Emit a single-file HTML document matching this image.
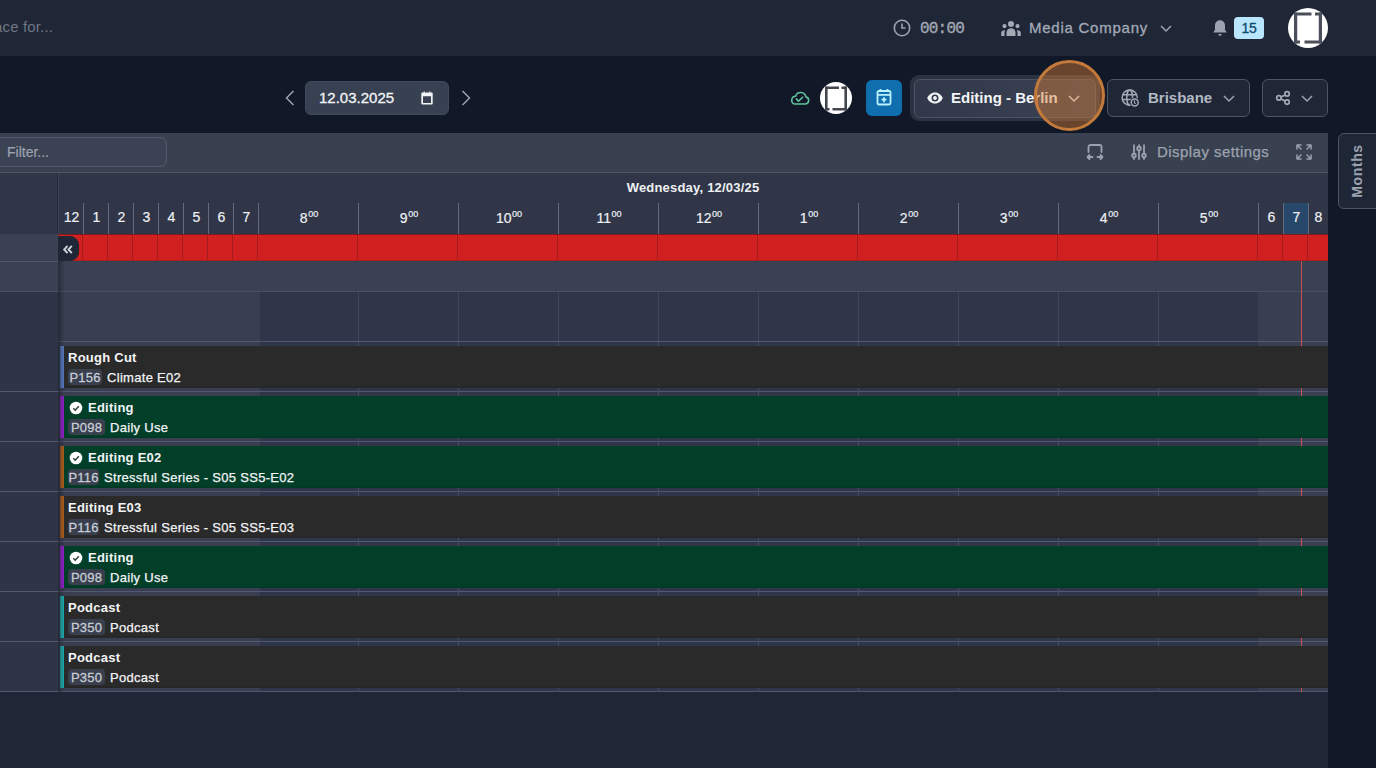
<!DOCTYPE html>
<html><head><meta charset="utf-8">
<style>
*{box-sizing:border-box;margin:0;padding:0}
html,body{width:1376px;height:768px;overflow:hidden;background:#111827;font-family:"Liberation Sans",sans-serif;position:relative}
.a{position:absolute}
.t{position:absolute;white-space:nowrap;line-height:1}
svg{position:absolute;overflow:visible}
</style></head><body>

<!-- TOP BAR -->
<div class="a" style="left:0;top:0;width:1376px;height:56px;background:#1f2737"></div>
<div class="t" style="left:-6px;top:19px;font-size:15px;color:#6f7684;letter-spacing:0.15px">ace for...</div>

<!-- clock -->
<svg style="left:893px;top:19px" width="18" height="18" viewBox="0 0 18 18" fill="none" stroke="#9ca3af" stroke-width="1.6"><circle cx="9" cy="9" r="7.7"/><path d="M9 4.5V9h3.5"/></svg>
<div class="t" style="left:920px;top:21px;font-size:16px;font-family:'Liberation Mono';color:#a3a9b4;letter-spacing:-0.8px;-webkit-text-stroke:0.35px #a3a9b4">00:00</div>

<!-- people -->
<svg style="left:1001px;top:20px" width="20" height="16" viewBox="0 0 20 16" fill="#a3aab6"><circle cx="10" cy="4" r="3"/><circle cx="3.5" cy="6.1" r="2.1"/><circle cx="16.5" cy="6.1" r="2.1"/><path d="M5.5 16v-3.2a4.5 4.5 0 0 1 9 0V16z"/><path d="M0.2 16v-2.8a3 3 0 0 1 3.9-2.9c-.4.8-.6 1.6-.6 2.5V16z"/><path d="M19.8 16v-2.8a3 3 0 0 0-3.9-2.9c.4.8.6 1.6.6 2.5V16z"/></svg>
<div class="t" style="left:1029px;top:20px;font-size:15px;color:#a3aab6;letter-spacing:0.75px;-webkit-text-stroke:0.3px #a3aab6">Media Company</div>
<svg style="left:1160px;top:25px" width="12" height="7" viewBox="0 0 12 7" fill="none" stroke="#9ca3af" stroke-width="1.5"><path d="M1 1l5 5 5-5"/></svg>

<!-- bell -->
<svg style="left:1212px;top:19px" width="16" height="18" viewBox="0 0 16 18" fill="#9ca3af"><path d="M8 1.2c-3 0-5 2.3-5 5.3v4.2L1.3 13.6h13.4L13 10.7V6.5c0-3-2-5.3-5-5.3z"/><path d="M6.3 15h3.4c0 1-.8 1.8-1.7 1.8S6.3 16 6.3 15z"/></svg>
<div class="a" style="left:1234px;top:17px;width:30px;height:22px;border-radius:4px;background:#bae6fd"></div>
<div class="t" style="left:1234px;top:21px;width:30px;text-align:center;font-size:14px;color:#0c4a6e;letter-spacing:-0.4px;-webkit-text-stroke:0.3px #0c4a6e">15</div>

<!-- avatar -->
<div class="a" style="left:1288px;top:8px;width:40px;height:40px;border-radius:50%;background:#fff;overflow:hidden">
  <svg style="left:0;top:0" width="40" height="40" viewBox="0 0 40 40" fill="#4b4f5a"><rect x="6" y="4.5" width="3.2" height="31"/><rect x="6" y="4.5" width="17.5" height="3"/><rect x="27" y="4.5" width="7" height="3"/><rect x="30.8" y="4.5" width="3.2" height="31"/><rect x="6" y="32.5" width="6" height="3"/><rect x="16.5" y="32.5" width="17.5" height="3"/></svg>
</div>

<!-- SECOND BAR -->
<svg style="left:285px;top:90px" width="10" height="16" viewBox="0 0 10 16" fill="none" stroke="#9ca3af" stroke-width="1.5"><path d="M8.5 1L1.5 8l7 7"/></svg>
<div class="a" style="left:305px;top:81px;width:144px;height:34px;border-radius:6px;background:#374151;border:1px solid #414a5a"></div>
<div class="t" style="left:319px;top:90px;font-size:15px;color:#f3f4f6;-webkit-text-stroke:0.3px #f3f4f6">12.03.2025</div>
<svg style="left:420px;top:90px" width="14" height="15" viewBox="0 0 14 15" fill="#f3f4f6"><path d="M2.3 2.6h9.4a1 1 0 0 1 1 1v10a1 1 0 0 1-1 1H2.3a1 1 0 0 1-1-1v-10a1 1 0 0 1 1-1zM3 6.3v6.8h8V6.3z"/><path d="M3.6 1.4h1.2v1.4H3.6zM9.2 1.4h1.2v1.4H9.2z"/></svg>
<svg style="left:461px;top:90px" width="10" height="16" viewBox="0 0 10 16" fill="none" stroke="#9ca3af" stroke-width="1.5"><path d="M1.5 1l7 7-7 7"/></svg>

<!-- cloud -->
<svg style="left:790px;top:90px" width="20" height="16" viewBox="0 0 20 16" fill="none" stroke="#5fc19e" stroke-width="1.6" stroke-linejoin="round" stroke-linecap="round"><path d="M4.8 14H15.2A3.6 3.6 0 0 0 15.9 6.9A5.3 5.3 0 0 0 5.6 6.3A3.9 3.9 0 0 0 4.8 14Z"/><path d="M6.4 8.9l2.1 2.3 4.1-4"/></svg>
<!-- small avatar -->
<div class="a" style="left:820px;top:82px;width:32px;height:32px;border-radius:50%;background:#fff;overflow:hidden">
  <svg style="left:0;top:0" width="32" height="32" viewBox="0 0 32 32" fill="#42464f"><rect x="5" y="4.5" width="2.6" height="24"/><rect x="5" y="4.5" width="14" height="2.5"/><rect x="21.5" y="4.5" width="5.5" height="2.5"/><rect x="24.4" y="4.5" width="2.6" height="24"/><rect x="5" y="26" width="4.5" height="2.5"/><rect x="12.5" y="26" width="14.5" height="2.5"/></svg>
</div>
<!-- blue button -->
<div class="a" style="left:866px;top:80px;width:36px;height:36px;border-radius:6px;background:#0f6eae"></div>
<svg style="left:876px;top:88px" width="16" height="18" viewBox="0 0 16 18" fill="none" stroke="#baf3fd" stroke-width="1.8"><rect x="1.5" y="3" width="13" height="13.5" rx="1.5"/><path d="M1.5 6.8h13M4.5 1v3M11.5 1v3M8 9.2v5M5.5 11.7h5"/></svg>

<!-- Editing - Berlin -->
<div class="a" style="left:910px;top:75px;width:190px;height:46px;border-radius:9px;background:#2b3343"></div>
<div class="a" style="left:914px;top:79px;width:182px;height:39px;border-radius:6px;background:linear-gradient(90deg,#303849,#3a4253);border:1px solid #4b5364"></div>
<svg style="left:927px;top:92px" width="16" height="12" viewBox="0 0 16 12" fill="#f3f4f6"><path d="M8 .5C4.3.5 1.4 3 .2 6c1.2 3 4.1 5.5 7.8 5.5s6.6-2.5 7.8-5.5C14.6 3 11.7.5 8 .5zm0 9a3.5 3.5 0 1 1 0-7 3.5 3.5 0 0 1 0 7zm0-5.4a1.9 1.9 0 1 0 0 3.8 1.9 1.9 0 0 0 0-3.8z"/></svg>
<div class="t" style="left:951px;top:90px;font-size:15px;font-weight:700;color:#f3f4f6">Editing - Berlin</div>
<svg style="left:1068px;top:95px" width="12" height="7" viewBox="0 0 12 7" fill="none" stroke="#e5e7eb" stroke-width="1.5"><path d="M1 1l5 5 5-5"/></svg>

<!-- Brisbane -->
<div class="a" style="left:1107px;top:79px;width:143px;height:38px;border-radius:6px;background:#1f2737;border:1px solid #4b5563"></div>
<svg style="left:1120px;top:89px" width="20" height="19" viewBox="0 0 20 19" fill="none" stroke="#a3aab6" stroke-width="1.5"><circle cx="9.7" cy="8.7" r="7.6"/><ellipse cx="9.7" cy="8.7" rx="2.9" ry="7.6"/><path d="M2.6 5.8h14.2M2.3 10.4h14.8"/><circle cx="14.7" cy="13.6" r="5.1" fill="#1f2737" stroke="none"/><circle cx="14.7" cy="13.6" r="3.5"/><path d="M14.5 11.6v2.2l1.1 1.1" stroke-width="1.2"/></svg>
<div class="t" style="left:1148px;top:90px;font-size:15px;font-weight:700;color:#b3b8c2">Brisbane</div>
<svg style="left:1223px;top:95px" width="12" height="7" viewBox="0 0 12 7" fill="none" stroke="#9ca3af" stroke-width="1.5"><path d="M1 1l5 5 5-5"/></svg>

<!-- share -->
<div class="a" style="left:1262px;top:79px;width:66px;height:38px;border-radius:6px;background:#1f2737;border:1px solid #4b5563"></div>
<svg style="left:1276px;top:91px" width="15" height="15" viewBox="0 0 15 15" fill="none" stroke="#a3aab6" stroke-width="1.7"><circle cx="2.9" cy="6.9" r="2.2"/><circle cx="11.1" cy="2.9" r="2.2"/><circle cx="11.1" cy="11.1" r="2.2"/><path d="M4.9 5.9l4.2-2M4.9 7.9l4.2 2.2"/></svg>
<svg style="left:1301px;top:95px" width="12" height="7" viewBox="0 0 12 7" fill="none" stroke="#9ca3af" stroke-width="1.5"><path d="M1 1l5 5 5-5"/></svg>

<!-- orange highlight -->
<div class="a" style="left:1034px;top:60px;width:71px;height:71px;border-radius:50%;background:rgba(214,124,54,0.45);border:3px solid #c47a3a"></div>

<!-- CONTENT -->
<div class="a" style="left:0;top:133px;width:1328px;height:40px;background:#394151;border-bottom:1px solid #4f5767"></div>
<div class="a" style="left:-10px;top:137px;width:177px;height:30px;border-radius:7px;background:#3a4253;border:1px solid #535b6b"></div>
<div class="t" style="left:7px;top:145px;font-size:14px;color:#9ca3af;-webkit-text-stroke:0.2px #9ca3af">Filter...</div>
<svg style="left:1086px;top:144px" width="18" height="17" viewBox="0 0 18 17" fill="none" stroke="#9ca3af" stroke-width="1.8" stroke-linecap="round" stroke-linejoin="round"><path d="M2.5 8V3a2 2 0 0 1 2-2h9a2 2 0 0 1 2 2v5"/><path d="M1.5 13h5M1.5 13l2-2M1.5 13l2 2M16.5 13h-5M16.5 13l-2-2M16.5 13l-2 2"/></svg>
<svg style="left:1131px;top:144px" width="16" height="16" viewBox="0 0 16 16" fill="none" stroke="#9ca3af" stroke-width="1.8" stroke-linecap="round"><path d="M3 1.2v8.6M3 13.3V15M8 1.2v1.5M8 6.3V15M13 1.2v8.6M13 13.3V15"/><circle cx="3" cy="11.5" r="1.8"/><circle cx="8" cy="4.5" r="1.8"/><circle cx="13" cy="11.5" r="1.8"/></svg>
<div class="t" style="left:1157px;top:144px;font-size:15px;color:#9ca3af;letter-spacing:0.45px;-webkit-text-stroke:0.25px #9ca3af">Display settings</div>
<svg style="left:1296px;top:144px" width="16" height="16" viewBox="0 0 16 16" fill="none" stroke="#9ca3af" stroke-width="1.5" stroke-linecap="round" stroke-linejoin="round"><path d="M1 5V1h4M1 1l4 4M11 1h4v4M15 1l-4 4M1 11v4h4M1 15l4-4M15 11v4h-4M15 15l-4-4"/></svg>
<div class="a" style="left:0;top:173px;width:1328px;height:61px;background:#303648"></div>
<div class="a" style="left:57px;top:173px;width:1px;height:61px;background:#252b3a"></div><div class="a" style="left:58px;top:173px;width:1px;height:61px;background:#3b4354"></div>
<div class="t" style="left:693px;top:181px;transform:translateX(-50%);font-size:13px;font-weight:700;color:#eef0f3;letter-spacing:0.2px">Wednesday, 12/03/25</div>
<div class="t" style="left:59px;top:210px;width:25px;text-align:center;font-size:14px;color:#eef0f3;-webkit-text-stroke:0.2px #eef0f3">12</div>
<div class="t" style="left:84px;top:210px;width:25px;text-align:center;font-size:14px;color:#eef0f3;-webkit-text-stroke:0.2px #eef0f3">1</div>
<div class="a" style="left:83px;top:203px;width:1px;height:31px;background:#646c7c"></div>
<div class="t" style="left:109px;top:210px;width:25px;text-align:center;font-size:14px;color:#eef0f3;-webkit-text-stroke:0.2px #eef0f3">2</div>
<div class="a" style="left:108px;top:203px;width:1px;height:31px;background:#646c7c"></div>
<div class="t" style="left:134px;top:210px;width:25px;text-align:center;font-size:14px;color:#eef0f3;-webkit-text-stroke:0.2px #eef0f3">3</div>
<div class="a" style="left:133px;top:203px;width:1px;height:31px;background:#646c7c"></div>
<div class="t" style="left:159px;top:210px;width:25px;text-align:center;font-size:14px;color:#eef0f3;-webkit-text-stroke:0.2px #eef0f3">4</div>
<div class="a" style="left:158px;top:203px;width:1px;height:31px;background:#646c7c"></div>
<div class="t" style="left:184px;top:210px;width:25px;text-align:center;font-size:14px;color:#eef0f3;-webkit-text-stroke:0.2px #eef0f3">5</div>
<div class="a" style="left:183px;top:203px;width:1px;height:31px;background:#646c7c"></div>
<div class="t" style="left:209px;top:210px;width:25px;text-align:center;font-size:14px;color:#eef0f3;-webkit-text-stroke:0.2px #eef0f3">6</div>
<div class="a" style="left:208px;top:203px;width:1px;height:31px;background:#646c7c"></div>
<div class="t" style="left:234px;top:210px;width:25px;text-align:center;font-size:14px;color:#eef0f3;-webkit-text-stroke:0.2px #eef0f3">7</div>
<div class="a" style="left:233px;top:203px;width:1px;height:31px;background:#646c7c"></div>
<div class="t" style="left:259px;top:210px;width:100px;text-align:center;font-size:14px;color:#eef0f3;-webkit-text-stroke:0.2px #eef0f3">8<sup style="font-size:9px;vertical-align:6px;margin-left:0.5px">00</sup></div>
<div class="a" style="left:258px;top:203px;width:1px;height:31px;background:#646c7c"></div>
<div class="t" style="left:359px;top:210px;width:100px;text-align:center;font-size:14px;color:#eef0f3;-webkit-text-stroke:0.2px #eef0f3">9<sup style="font-size:9px;vertical-align:6px;margin-left:0.5px">00</sup></div>
<div class="a" style="left:358px;top:203px;width:1px;height:31px;background:#646c7c"></div>
<div class="t" style="left:459px;top:210px;width:100px;text-align:center;font-size:14px;color:#eef0f3;-webkit-text-stroke:0.2px #eef0f3">10<sup style="font-size:9px;vertical-align:6px;margin-left:0.5px">00</sup></div>
<div class="a" style="left:458px;top:203px;width:1px;height:31px;background:#646c7c"></div>
<div class="t" style="left:559px;top:210px;width:100px;text-align:center;font-size:14px;color:#eef0f3;-webkit-text-stroke:0.2px #eef0f3">11<sup style="font-size:9px;vertical-align:6px;margin-left:0.5px">00</sup></div>
<div class="a" style="left:558px;top:203px;width:1px;height:31px;background:#646c7c"></div>
<div class="t" style="left:659px;top:210px;width:100px;text-align:center;font-size:14px;color:#eef0f3;-webkit-text-stroke:0.2px #eef0f3">12<sup style="font-size:9px;vertical-align:6px;margin-left:0.5px">00</sup></div>
<div class="a" style="left:658px;top:203px;width:1px;height:31px;background:#646c7c"></div>
<div class="t" style="left:759px;top:210px;width:100px;text-align:center;font-size:14px;color:#eef0f3;-webkit-text-stroke:0.2px #eef0f3">1<sup style="font-size:9px;vertical-align:6px;margin-left:0.5px">00</sup></div>
<div class="a" style="left:758px;top:203px;width:1px;height:31px;background:#646c7c"></div>
<div class="t" style="left:859px;top:210px;width:100px;text-align:center;font-size:14px;color:#eef0f3;-webkit-text-stroke:0.2px #eef0f3">2<sup style="font-size:9px;vertical-align:6px;margin-left:0.5px">00</sup></div>
<div class="a" style="left:858px;top:203px;width:1px;height:31px;background:#646c7c"></div>
<div class="t" style="left:959px;top:210px;width:100px;text-align:center;font-size:14px;color:#eef0f3;-webkit-text-stroke:0.2px #eef0f3">3<sup style="font-size:9px;vertical-align:6px;margin-left:0.5px">00</sup></div>
<div class="a" style="left:958px;top:203px;width:1px;height:31px;background:#646c7c"></div>
<div class="t" style="left:1059px;top:210px;width:100px;text-align:center;font-size:14px;color:#eef0f3;-webkit-text-stroke:0.2px #eef0f3">4<sup style="font-size:9px;vertical-align:6px;margin-left:0.5px">00</sup></div>
<div class="a" style="left:1058px;top:203px;width:1px;height:31px;background:#646c7c"></div>
<div class="t" style="left:1159px;top:210px;width:100px;text-align:center;font-size:14px;color:#eef0f3;-webkit-text-stroke:0.2px #eef0f3">5<sup style="font-size:9px;vertical-align:6px;margin-left:0.5px">00</sup></div>
<div class="a" style="left:1158px;top:203px;width:1px;height:31px;background:#646c7c"></div>
<div class="t" style="left:1259px;top:210px;width:25px;text-align:center;font-size:14px;color:#eef0f3;-webkit-text-stroke:0.2px #eef0f3">6</div>
<div class="a" style="left:1258px;top:203px;width:1px;height:31px;background:#646c7c"></div>
<div class="a" style="left:1284px;top:203px;width:25px;height:31px;background:#27486a"></div>
<div class="t" style="left:1284px;top:210px;width:25px;text-align:center;font-size:14px;color:#eef0f3;-webkit-text-stroke:0.2px #eef0f3">7</div>
<div class="a" style="left:1283px;top:203px;width:1px;height:31px;background:#646c7c"></div>
<div class="t" style="left:1309px;top:210px;width:19px;text-align:center;font-size:14px;color:#eef0f3;-webkit-text-stroke:0.2px #eef0f3">8</div>
<div class="a" style="left:1308px;top:203px;width:1px;height:31px;background:#646c7c"></div>
<div class="a" style="left:58px;top:234px;width:1270px;height:27px;background:#d02020;border-top:1px solid #7a1a1e;border-bottom:1px solid #b01c1c"></div>
<div class="a" style="left:82px;top:235px;width:1px;height:26px;background:#a51c1c"></div>
<div class="a" style="left:107px;top:235px;width:1px;height:26px;background:#a51c1c"></div>
<div class="a" style="left:132px;top:235px;width:1px;height:26px;background:#a51c1c"></div>
<div class="a" style="left:157px;top:235px;width:1px;height:26px;background:#a51c1c"></div>
<div class="a" style="left:182px;top:235px;width:1px;height:26px;background:#a51c1c"></div>
<div class="a" style="left:207px;top:235px;width:1px;height:26px;background:#a51c1c"></div>
<div class="a" style="left:232px;top:235px;width:1px;height:26px;background:#a51c1c"></div>
<div class="a" style="left:257px;top:235px;width:1px;height:26px;background:#a51c1c"></div>
<div class="a" style="left:357px;top:235px;width:1px;height:26px;background:#a51c1c"></div>
<div class="a" style="left:457px;top:235px;width:1px;height:26px;background:#a51c1c"></div>
<div class="a" style="left:557px;top:235px;width:1px;height:26px;background:#a51c1c"></div>
<div class="a" style="left:657px;top:235px;width:1px;height:26px;background:#a51c1c"></div>
<div class="a" style="left:757px;top:235px;width:1px;height:26px;background:#a51c1c"></div>
<div class="a" style="left:857px;top:235px;width:1px;height:26px;background:#a51c1c"></div>
<div class="a" style="left:957px;top:235px;width:1px;height:26px;background:#a51c1c"></div>
<div class="a" style="left:1057px;top:235px;width:1px;height:26px;background:#a51c1c"></div>
<div class="a" style="left:1157px;top:235px;width:1px;height:26px;background:#a51c1c"></div>
<div class="a" style="left:1257px;top:235px;width:1px;height:26px;background:#a51c1c"></div>
<div class="a" style="left:1282px;top:235px;width:1px;height:26px;background:#a51c1c"></div>
<div class="a" style="left:1307px;top:235px;width:1px;height:26px;background:#a51c1c"></div>
<div class="a" style="left:0;top:234px;width:58px;height:58px;background:#3a4152"></div>
<div class="a" style="left:0;top:261px;width:58px;height:1px;background:#4f5768"></div>
<div class="a" style="left:0;top:291px;width:58px;height:1px;background:#4a5262"></div>
<div class="a" style="left:0;top:292px;width:58px;height:400px;background:#2f3547"></div>
<div class="a" style="left:58px;top:236px;width:21px;height:25px;border-radius:0 9px 9px 0;background:#1f2635"></div>
<svg style="left:63px;top:245px" width="10" height="9" viewBox="0 0 10 9" fill="none" stroke="#c9ced6" stroke-width="2" stroke-linejoin="miter"><path d="M4.5 0.8L1.2 4.5l3.3 3.7M8.8 0.8L5.5 4.5l3.3 3.7"/></svg>
<div class="a" style="left:58px;top:261px;width:1270px;height:31px;background:#3a4152;border-bottom:1px solid #4a5262"></div>
<div class="a" style="left:58px;top:292px;width:1270px;height:50px;background:#30364a;border-bottom:1px solid #535872"></div>
<div class="a" style="left:59px;top:292px;width:201px;height:49px;background:#393f51"></div>
<div class="a" style="left:1258px;top:292px;width:70px;height:49px;background:#393f51"></div>
<div class="a" style="left:358px;top:292px;width:1px;height:49px;background:#3f4758"></div>
<div class="a" style="left:458px;top:292px;width:1px;height:49px;background:#3f4758"></div>
<div class="a" style="left:558px;top:292px;width:1px;height:49px;background:#3f4758"></div>
<div class="a" style="left:658px;top:292px;width:1px;height:49px;background:#3f4758"></div>
<div class="a" style="left:758px;top:292px;width:1px;height:49px;background:#3f4758"></div>
<div class="a" style="left:858px;top:292px;width:1px;height:49px;background:#3f4758"></div>
<div class="a" style="left:958px;top:292px;width:1px;height:49px;background:#3f4758"></div>
<div class="a" style="left:1058px;top:292px;width:1px;height:49px;background:#3f4758"></div>
<div class="a" style="left:1158px;top:292px;width:1px;height:49px;background:#3f4758"></div>
<div class="a" style="left:1301px;top:261px;width:1px;height:81px;background:#c85050"></div>
<div class="a" style="left:58px;top:342px;width:1270px;height:50px;background:#30364a"></div>
<div class="a" style="left:59px;top:342px;width:201px;height:50px;background:#393f51"></div>
<div class="a" style="left:1258px;top:342px;width:70px;height:50px;background:#393f51"></div>
<div class="a" style="left:0;top:391px;width:1328px;height:1px;background:#535872"></div>
<div class="a" style="left:358px;top:342px;width:1px;height:50px;background:#454b60"></div>
<div class="a" style="left:458px;top:342px;width:1px;height:50px;background:#454b60"></div>
<div class="a" style="left:558px;top:342px;width:1px;height:50px;background:#454b60"></div>
<div class="a" style="left:658px;top:342px;width:1px;height:50px;background:#454b60"></div>
<div class="a" style="left:758px;top:342px;width:1px;height:50px;background:#454b60"></div>
<div class="a" style="left:858px;top:342px;width:1px;height:50px;background:#454b60"></div>
<div class="a" style="left:958px;top:342px;width:1px;height:50px;background:#454b60"></div>
<div class="a" style="left:1058px;top:342px;width:1px;height:50px;background:#454b60"></div>
<div class="a" style="left:1158px;top:342px;width:1px;height:50px;background:#454b60"></div>
<div class="a" style="left:1301px;top:342px;width:1px;height:50px;background:#c85050"></div>
<div class="a" style="left:60px;top:346px;width:1268px;height:42px;background:#2a2a2b;box-shadow:inset 0 -2px 0 rgba(0,0,0,0.07)"></div>
<div class="a" style="left:60px;top:346px;width:4px;height:42px;background:#5b7fc7"></div>
<div class="t" style="left:68px;top:351px;font-size:13px;font-weight:700;color:#f3f4f6;letter-spacing:0.25px">Rough Cut</div>
<div class="a" style="left:68px;top:369px;width:34px;height:16px;border-radius:4px;background:#393f4d"></div>
<div class="t" style="left:68px;top:371px;width:34px;text-align:center;font-size:13px;color:#c6ccd6;letter-spacing:0.2px;-webkit-text-stroke:0.3px #c6ccd6">P156</div>
<div class="t" style="left:107px;top:371px;font-size:13px;color:#f3f4f6;letter-spacing:0.3px;-webkit-text-stroke:0.25px #f3f4f6">Climate E02</div>
<div class="a" style="left:58px;top:392px;width:1270px;height:50px;background:#30364a"></div>
<div class="a" style="left:59px;top:392px;width:201px;height:50px;background:#393f51"></div>
<div class="a" style="left:1258px;top:392px;width:70px;height:50px;background:#393f51"></div>
<div class="a" style="left:0;top:441px;width:1328px;height:1px;background:#535872"></div>
<div class="a" style="left:358px;top:392px;width:1px;height:50px;background:#454b60"></div>
<div class="a" style="left:458px;top:392px;width:1px;height:50px;background:#454b60"></div>
<div class="a" style="left:558px;top:392px;width:1px;height:50px;background:#454b60"></div>
<div class="a" style="left:658px;top:392px;width:1px;height:50px;background:#454b60"></div>
<div class="a" style="left:758px;top:392px;width:1px;height:50px;background:#454b60"></div>
<div class="a" style="left:858px;top:392px;width:1px;height:50px;background:#454b60"></div>
<div class="a" style="left:958px;top:392px;width:1px;height:50px;background:#454b60"></div>
<div class="a" style="left:1058px;top:392px;width:1px;height:50px;background:#454b60"></div>
<div class="a" style="left:1158px;top:392px;width:1px;height:50px;background:#454b60"></div>
<div class="a" style="left:1301px;top:392px;width:1px;height:50px;background:#c85050"></div>
<div class="a" style="left:60px;top:396px;width:1268px;height:42px;background:#013f29;box-shadow:inset 0 -2px 0 rgba(0,0,0,0.07)"></div>
<div class="a" style="left:60px;top:396px;width:4px;height:42px;background:#9822d0"></div>
<svg style="left:69px;top:401px" width="14" height="14" viewBox="0 0 14 14"><circle cx="7" cy="7" r="6.3" fill="#fff"/><path d="M4.3 7.3l1.9 1.9 3.6-3.9" fill="none" stroke="#1f3d30" stroke-width="1.4"/></svg>
<div class="t" style="left:88px;top:401px;font-size:13px;font-weight:700;color:#f3f4f6;letter-spacing:0.25px">Editing</div>
<div class="a" style="left:68px;top:419px;width:37px;height:16px;border-radius:4px;background:#393f4d"></div>
<div class="t" style="left:68px;top:421px;width:37px;text-align:center;font-size:13px;color:#c6ccd6;letter-spacing:0.2px;-webkit-text-stroke:0.3px #c6ccd6">P098</div>
<div class="t" style="left:110px;top:421px;font-size:13px;color:#f3f4f6;letter-spacing:0.3px;-webkit-text-stroke:0.25px #f3f4f6">Daily Use</div>
<div class="a" style="left:58px;top:442px;width:1270px;height:50px;background:#30364a"></div>
<div class="a" style="left:59px;top:442px;width:201px;height:50px;background:#393f51"></div>
<div class="a" style="left:1258px;top:442px;width:70px;height:50px;background:#393f51"></div>
<div class="a" style="left:0;top:491px;width:1328px;height:1px;background:#535872"></div>
<div class="a" style="left:358px;top:442px;width:1px;height:50px;background:#454b60"></div>
<div class="a" style="left:458px;top:442px;width:1px;height:50px;background:#454b60"></div>
<div class="a" style="left:558px;top:442px;width:1px;height:50px;background:#454b60"></div>
<div class="a" style="left:658px;top:442px;width:1px;height:50px;background:#454b60"></div>
<div class="a" style="left:758px;top:442px;width:1px;height:50px;background:#454b60"></div>
<div class="a" style="left:858px;top:442px;width:1px;height:50px;background:#454b60"></div>
<div class="a" style="left:958px;top:442px;width:1px;height:50px;background:#454b60"></div>
<div class="a" style="left:1058px;top:442px;width:1px;height:50px;background:#454b60"></div>
<div class="a" style="left:1158px;top:442px;width:1px;height:50px;background:#454b60"></div>
<div class="a" style="left:1301px;top:442px;width:1px;height:50px;background:#c85050"></div>
<div class="a" style="left:60px;top:446px;width:1268px;height:42px;background:#013f29;box-shadow:inset 0 -2px 0 rgba(0,0,0,0.07)"></div>
<div class="a" style="left:60px;top:446px;width:4px;height:42px;background:#b8621b"></div>
<svg style="left:69px;top:451px" width="14" height="14" viewBox="0 0 14 14"><circle cx="7" cy="7" r="6.3" fill="#fff"/><path d="M4.3 7.3l1.9 1.9 3.6-3.9" fill="none" stroke="#1f3d30" stroke-width="1.4"/></svg>
<div class="t" style="left:88px;top:451px;font-size:13px;font-weight:700;color:#f3f4f6;letter-spacing:0.25px">Editing E02</div>
<div class="a" style="left:68px;top:469px;width:31px;height:16px;border-radius:4px;background:#393f4d"></div>
<div class="t" style="left:68px;top:471px;width:31px;text-align:center;font-size:13px;color:#c6ccd6;letter-spacing:0.2px;-webkit-text-stroke:0.3px #c6ccd6">P116</div>
<div class="t" style="left:104px;top:471px;font-size:13px;color:#f3f4f6;letter-spacing:0.3px;-webkit-text-stroke:0.25px #f3f4f6">Stressful Series - S05 SS5-E02</div>
<div class="a" style="left:58px;top:492px;width:1270px;height:50px;background:#30364a"></div>
<div class="a" style="left:59px;top:492px;width:201px;height:50px;background:#393f51"></div>
<div class="a" style="left:1258px;top:492px;width:70px;height:50px;background:#393f51"></div>
<div class="a" style="left:0;top:541px;width:1328px;height:1px;background:#535872"></div>
<div class="a" style="left:358px;top:492px;width:1px;height:50px;background:#454b60"></div>
<div class="a" style="left:458px;top:492px;width:1px;height:50px;background:#454b60"></div>
<div class="a" style="left:558px;top:492px;width:1px;height:50px;background:#454b60"></div>
<div class="a" style="left:658px;top:492px;width:1px;height:50px;background:#454b60"></div>
<div class="a" style="left:758px;top:492px;width:1px;height:50px;background:#454b60"></div>
<div class="a" style="left:858px;top:492px;width:1px;height:50px;background:#454b60"></div>
<div class="a" style="left:958px;top:492px;width:1px;height:50px;background:#454b60"></div>
<div class="a" style="left:1058px;top:492px;width:1px;height:50px;background:#454b60"></div>
<div class="a" style="left:1158px;top:492px;width:1px;height:50px;background:#454b60"></div>
<div class="a" style="left:1301px;top:492px;width:1px;height:50px;background:#c85050"></div>
<div class="a" style="left:60px;top:496px;width:1268px;height:42px;background:#2a2a2b;box-shadow:inset 0 -2px 0 rgba(0,0,0,0.07)"></div>
<div class="a" style="left:60px;top:496px;width:4px;height:42px;background:#b8621b"></div>
<div class="t" style="left:68px;top:501px;font-size:13px;font-weight:700;color:#f3f4f6;letter-spacing:0.25px">Editing E03</div>
<div class="a" style="left:68px;top:519px;width:31px;height:16px;border-radius:4px;background:#393f4d"></div>
<div class="t" style="left:68px;top:521px;width:31px;text-align:center;font-size:13px;color:#c6ccd6;letter-spacing:0.2px;-webkit-text-stroke:0.3px #c6ccd6">P116</div>
<div class="t" style="left:104px;top:521px;font-size:13px;color:#f3f4f6;letter-spacing:0.3px;-webkit-text-stroke:0.25px #f3f4f6">Stressful Series - S05 SS5-E03</div>
<div class="a" style="left:58px;top:542px;width:1270px;height:50px;background:#30364a"></div>
<div class="a" style="left:59px;top:542px;width:201px;height:50px;background:#393f51"></div>
<div class="a" style="left:1258px;top:542px;width:70px;height:50px;background:#393f51"></div>
<div class="a" style="left:0;top:591px;width:1328px;height:1px;background:#535872"></div>
<div class="a" style="left:358px;top:542px;width:1px;height:50px;background:#454b60"></div>
<div class="a" style="left:458px;top:542px;width:1px;height:50px;background:#454b60"></div>
<div class="a" style="left:558px;top:542px;width:1px;height:50px;background:#454b60"></div>
<div class="a" style="left:658px;top:542px;width:1px;height:50px;background:#454b60"></div>
<div class="a" style="left:758px;top:542px;width:1px;height:50px;background:#454b60"></div>
<div class="a" style="left:858px;top:542px;width:1px;height:50px;background:#454b60"></div>
<div class="a" style="left:958px;top:542px;width:1px;height:50px;background:#454b60"></div>
<div class="a" style="left:1058px;top:542px;width:1px;height:50px;background:#454b60"></div>
<div class="a" style="left:1158px;top:542px;width:1px;height:50px;background:#454b60"></div>
<div class="a" style="left:1301px;top:542px;width:1px;height:50px;background:#c85050"></div>
<div class="a" style="left:60px;top:546px;width:1268px;height:42px;background:#013f29;box-shadow:inset 0 -2px 0 rgba(0,0,0,0.07)"></div>
<div class="a" style="left:60px;top:546px;width:4px;height:42px;background:#9822d0"></div>
<svg style="left:69px;top:551px" width="14" height="14" viewBox="0 0 14 14"><circle cx="7" cy="7" r="6.3" fill="#fff"/><path d="M4.3 7.3l1.9 1.9 3.6-3.9" fill="none" stroke="#1f3d30" stroke-width="1.4"/></svg>
<div class="t" style="left:88px;top:551px;font-size:13px;font-weight:700;color:#f3f4f6;letter-spacing:0.25px">Editing</div>
<div class="a" style="left:68px;top:569px;width:37px;height:16px;border-radius:4px;background:#393f4d"></div>
<div class="t" style="left:68px;top:571px;width:37px;text-align:center;font-size:13px;color:#c6ccd6;letter-spacing:0.2px;-webkit-text-stroke:0.3px #c6ccd6">P098</div>
<div class="t" style="left:110px;top:571px;font-size:13px;color:#f3f4f6;letter-spacing:0.3px;-webkit-text-stroke:0.25px #f3f4f6">Daily Use</div>
<div class="a" style="left:58px;top:592px;width:1270px;height:50px;background:#30364a"></div>
<div class="a" style="left:59px;top:592px;width:201px;height:50px;background:#393f51"></div>
<div class="a" style="left:1258px;top:592px;width:70px;height:50px;background:#393f51"></div>
<div class="a" style="left:0;top:641px;width:1328px;height:1px;background:#535872"></div>
<div class="a" style="left:358px;top:592px;width:1px;height:50px;background:#454b60"></div>
<div class="a" style="left:458px;top:592px;width:1px;height:50px;background:#454b60"></div>
<div class="a" style="left:558px;top:592px;width:1px;height:50px;background:#454b60"></div>
<div class="a" style="left:658px;top:592px;width:1px;height:50px;background:#454b60"></div>
<div class="a" style="left:758px;top:592px;width:1px;height:50px;background:#454b60"></div>
<div class="a" style="left:858px;top:592px;width:1px;height:50px;background:#454b60"></div>
<div class="a" style="left:958px;top:592px;width:1px;height:50px;background:#454b60"></div>
<div class="a" style="left:1058px;top:592px;width:1px;height:50px;background:#454b60"></div>
<div class="a" style="left:1158px;top:592px;width:1px;height:50px;background:#454b60"></div>
<div class="a" style="left:1301px;top:592px;width:1px;height:50px;background:#c85050"></div>
<div class="a" style="left:60px;top:596px;width:1268px;height:42px;background:#2a2a2b;box-shadow:inset 0 -2px 0 rgba(0,0,0,0.07)"></div>
<div class="a" style="left:60px;top:596px;width:4px;height:42px;background:#1fb5b5"></div>
<div class="t" style="left:68px;top:601px;font-size:13px;font-weight:700;color:#f3f4f6;letter-spacing:0.25px">Podcast</div>
<div class="a" style="left:68px;top:619px;width:37px;height:16px;border-radius:4px;background:#393f4d"></div>
<div class="t" style="left:68px;top:621px;width:37px;text-align:center;font-size:13px;color:#c6ccd6;letter-spacing:0.2px;-webkit-text-stroke:0.3px #c6ccd6">P350</div>
<div class="t" style="left:110px;top:621px;font-size:13px;color:#f3f4f6;letter-spacing:0.3px;-webkit-text-stroke:0.25px #f3f4f6">Podcast</div>
<div class="a" style="left:58px;top:642px;width:1270px;height:50px;background:#30364a"></div>
<div class="a" style="left:59px;top:642px;width:201px;height:50px;background:#393f51"></div>
<div class="a" style="left:1258px;top:642px;width:70px;height:50px;background:#393f51"></div>
<div class="a" style="left:0;top:691px;width:1328px;height:1px;background:#535872"></div>
<div class="a" style="left:358px;top:642px;width:1px;height:50px;background:#454b60"></div>
<div class="a" style="left:458px;top:642px;width:1px;height:50px;background:#454b60"></div>
<div class="a" style="left:558px;top:642px;width:1px;height:50px;background:#454b60"></div>
<div class="a" style="left:658px;top:642px;width:1px;height:50px;background:#454b60"></div>
<div class="a" style="left:758px;top:642px;width:1px;height:50px;background:#454b60"></div>
<div class="a" style="left:858px;top:642px;width:1px;height:50px;background:#454b60"></div>
<div class="a" style="left:958px;top:642px;width:1px;height:50px;background:#454b60"></div>
<div class="a" style="left:1058px;top:642px;width:1px;height:50px;background:#454b60"></div>
<div class="a" style="left:1158px;top:642px;width:1px;height:50px;background:#454b60"></div>
<div class="a" style="left:1301px;top:642px;width:1px;height:50px;background:#c85050"></div>
<div class="a" style="left:60px;top:646px;width:1268px;height:42px;background:#2a2a2b;box-shadow:inset 0 -2px 0 rgba(0,0,0,0.07)"></div>
<div class="a" style="left:60px;top:646px;width:4px;height:42px;background:#1fb5b5"></div>
<div class="t" style="left:68px;top:651px;font-size:13px;font-weight:700;color:#f3f4f6;letter-spacing:0.25px">Podcast</div>
<div class="a" style="left:68px;top:669px;width:37px;height:16px;border-radius:4px;background:#393f4d"></div>
<div class="t" style="left:68px;top:671px;width:37px;text-align:center;font-size:13px;color:#c6ccd6;letter-spacing:0.2px;-webkit-text-stroke:0.3px #c6ccd6">P350</div>
<div class="t" style="left:110px;top:671px;font-size:13px;color:#f3f4f6;letter-spacing:0.3px;-webkit-text-stroke:0.25px #f3f4f6">Podcast</div>
<div class="a" style="left:58px;top:261px;width:7px;height:431px;background:linear-gradient(90deg,rgba(22,27,38,0.55),rgba(22,27,38,0))"></div>
<div class="a" style="left:0;top:692px;width:1328px;height:76px;background:#1f2737"></div>

<!-- right sidebar Months tab -->
<div class="a" style="left:1338px;top:133px;width:46px;height:76px;border-radius:6px;background:#1f2737;border:1px solid #4b5563"></div>
<div class="t" style="left:1357px;top:171px;font-size:14px;font-weight:700;color:#9ca3af;transform:translate(-50%,-50%) rotate(-90deg);letter-spacing:0.6px">Months</div>

</body></html>
